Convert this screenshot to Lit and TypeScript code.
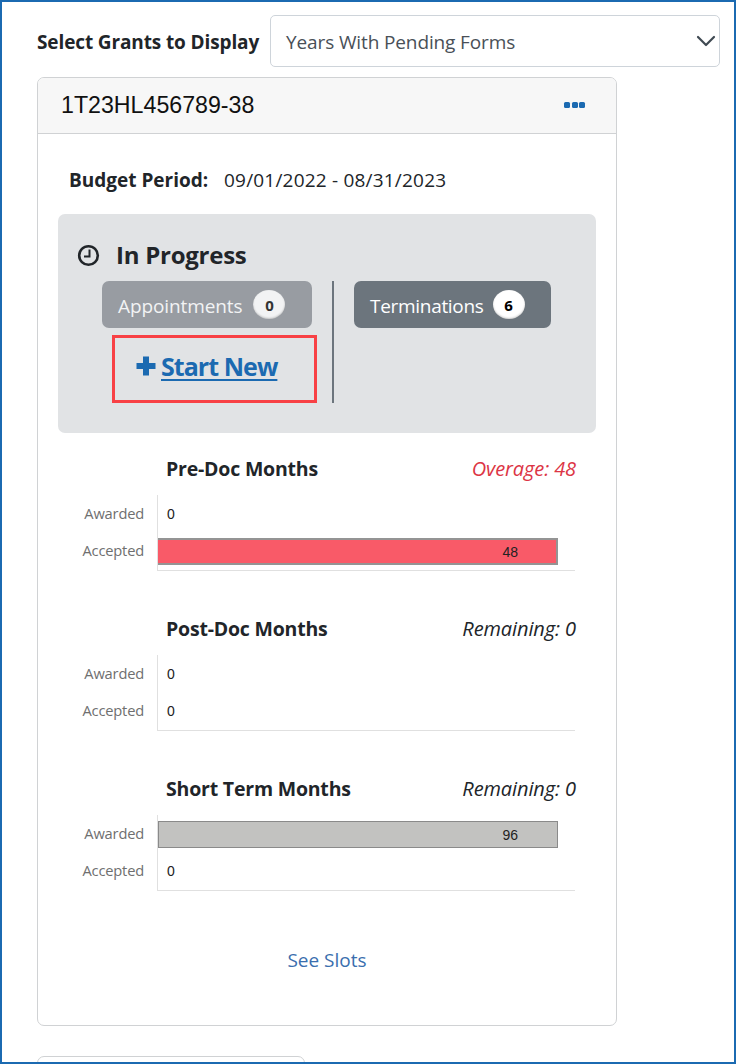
import { LitElement, html, css } from "lit";
import { customElement } from "lit/decorators.js";

type Row = { label: string; value: number; fill?: string };
type Chart = { title: string; status: string; over?: boolean; rows: Row[] };

const charts: Chart[] = [
  { title: "Pre-Doc Months", status: "Overage: 48", over: true, rows: [
    { label: "Awarded", value: 0 },
    { label: "Accepted", value: 48, fill: "fill-red" } ] },
  { title: "Post-Doc Months", status: "Remaining: 0", rows: [
    { label: "Awarded", value: 0 },
    { label: "Accepted", value: 0 } ] },
  { title: "Short Term Months", status: "Remaining: 0", rows: [
    { label: "Awarded", value: 96, fill: "fill-gray" },
    { label: "Accepted", value: 0 } ] },
];

@customElement("app-root")
export class AppRoot extends LitElement {
  static styles = css`
    :host { display: block; width: 736px; height: 1064px; box-sizing: border-box; overflow: hidden;
      border: 2px solid #1b6ab1; background: #fff;
      font-family: "Open Sans", "Noto Sans", sans-serif; color: #212529; }
    .page { padding: 13px 14px 0 35px; }
    .filter { display: flex; align-items: center; height: 52px; }
    .filter-label { width: 233px; flex: none; font-size: 19px; font-weight: 700; letter-spacing: -0.12px; color: #212529; white-space: nowrap; padding-top: 2px; box-sizing: border-box; }
    .select { flex: 1; box-sizing: border-box; height: 52px; border: 1px solid #ced4da; border-radius: 5px; display: flex; align-items: center; justify-content: space-between; padding: 0 1px 0 15px; font-size: 19px; letter-spacing: -0.12px; color: #495057; }
    .select span { padding-top: 2px; }
    .select svg { display: block; }
    .card { width: 580px; box-sizing: border-box; height: 949px; margin-top: 10px; border: 1px solid #d0d2d4; border-radius: 7px; overflow: hidden; }
    .card-head { height: 56px; box-sizing: border-box; background: #f7f7f7; border-bottom: 1px solid #d0d2d4; display: flex; align-items: center; justify-content: space-between; padding: 0 31px 0 23px; }
    .grant { font-family: "Liberation Sans", Arial, sans-serif; font-size: 23.2px; color: #111; }
    .dots { display: flex; gap: 1.5px; margin-top: -1px; }
    .dots i { width: 6px; height: 6px; border-radius: 1.5px; background: #1b6ab1; display: block; }
    .card-body { padding: 33px 20px 0; }
    .budget { display: flex; align-items: center; padding-left: 11px; font-size: 19px; line-height: 26px; letter-spacing: 0.2px; }
    .budget b { font-weight: 700; width: 155px; letter-spacing: 0; }
    .progress { margin-top: 21px; height: 219px; box-sizing: border-box; background: #e1e3e5; border-radius: 7px; padding: 25px 0 0 19px; }
    .progress-title { display: flex; align-items: center; gap: 16px; height: 32px; font-size: 24px; font-weight: 700; letter-spacing: -0.25px; line-height: 32px; color: #212529; }
    .columns { display: flex; margin-top: 10px; padding-left: 25px; }
    .left { width: 230px; height: 122px; border-right: 2px solid #6c757d; }
    .pill { height: 47px; box-sizing: border-box; display: inline-flex; align-items: center; border-radius: 7px; color: #fff; font-size: 19px; letter-spacing: -0.1px; padding: 0 0 0 16px; gap: 11px; }
    .pill-text { padding-top: 2px; }
    .pill.muted { width: 210px; background: #989ca2; color: #f2f3f4; }
    .pill.dark { width: 197px; background: #6c757d; margin-left: 20px; gap: 9px; letter-spacing: -0.3px; }
    .count { width: 32px; height: 29px; border-radius: 50%; background: #fff; color: #000; display: flex; align-items: center; justify-content: center; font-size: 15px; font-weight: 700; letter-spacing: 0; box-shadow: inset 0 -1px 2px rgba(0,0,0,.2); }
    .muted .count { background: #f2f3f4; color: #333; }
    .start { width: 205px; height: 68px; box-sizing: border-box; border: 3px solid #f84145; margin: 7px 0 0 10px; display: flex; align-items: center; padding: 0 0 6px 21px; gap: 5px; color: #1b6ab1; font-size: 25px; font-weight: 700; letter-spacing: -0.95px; }
    .start span { text-decoration: underline; text-decoration-thickness: 2px; text-underline-offset: 3px; }
    .chart { height: 160px; padding-top: 17px; box-sizing: border-box; }
    .chart-head { display: flex; justify-content: space-between; align-items: center; height: 36px; padding-left: 108px; padding-right: 20px; }
    .chart-title { font-size: 19.5px; font-weight: 700; letter-spacing: -0.2px; color: #212529; }
    .chart-status { font-size: 20px; font-style: italic; letter-spacing: -0.1px; color: #212529; }
    .chart-status.over { color: #dc3545; }
    .plot { display: grid; grid-template-columns: 86px 1fr; margin: 9px 21px 0 13px; }
    .labels { display: flex; flex-direction: column; }
    .labels div { height: 37px; box-sizing: border-box; padding-bottom: 1px; display: flex; align-items: center; justify-content: flex-end; padding-right: 13px; font-size: 14.7px; letter-spacing: -0.2px; color: #6f6f6f; }
    .bars { border-left: 1px solid #e0e0e0; border-bottom: 1px solid #e0e0e0; height: 76px; box-sizing: border-box; }
    .bar-row { height: 37px; display: flex; align-items: center; font-family: "Liberation Sans", Arial, sans-serif; font-size: 14px; color: #222; }
    .zero { padding-left: 9px; }
    .bar { width: 400px; height: 27px; box-sizing: border-box; border: 1px solid #8a8a8a; display: flex; align-items: center; justify-content: flex-end; margin-top: 2px; }
    .fill-red { background: #f95a68; border-color: #949494; border-width: 2px 2px 2px 0; padding-right: 38px; }
    .fill-gray { background: #c2c2c0; padding-right: 39px; }
    .see { text-align: center; font-size: 19px; color: #3a6eae; margin-top: 32px; line-height: 30px; }
    .next { width: 268px; height: 40px; margin-top: 30px; box-sizing: border-box; border: 1px solid #d0d2d4; border-radius: 7px; }
  `;

  private renderChart(c: Chart) {
    return html`<section class="chart">
      <div class="chart-head">
        <span class="chart-title">${c.title}</span>
        <span class="chart-status ${c.over ? "over" : ""}">${c.status}</span>
      </div>
      <div class="plot">
        <div class="labels">${c.rows.map((r) => html`<div>${r.label}</div>`)}</div>
        <div class="bars">
          ${c.rows.map((r) => html`<div class="bar-row">
            ${r.fill ? html`<div class="bar ${r.fill}">${r.value}</div>` : html`<div class="zero">${r.value}</div>`}
          </div>`)}
        </div>
      </div>
    </section>`;
  }

  render() {
    return html`<div class="page">
      <div class="filter">
        <div class="filter-label">Select Grants to Display</div>
        <div class="select"><span>Years With Pending Forms</span>
          <svg width="24" height="24" viewBox="0 0 24 24" fill="none" stroke="#3f4952" stroke-width="2.2" stroke-linecap="round" stroke-linejoin="round"><path d="M4 8l8 8 8-8"/></svg>
        </div>
      </div>
      <div class="card">
        <div class="card-head"><span class="grant">1T23HL456789-38</span>
          <div class="dots"><i></i><i></i><i></i></div></div>
        <div class="card-body">
          <div class="budget"><b>Budget Period:</b><span>09/01/2022 - 08/31/2023</span></div>
          <div class="progress">
            <div class="progress-title">
              <svg width="23" height="23" viewBox="0 0 23 23" fill="none" stroke="#212529"><circle cx="11.5" cy="11.5" r="9.3" stroke-width="2.6"/><path d="M12.5 5.5v7H7" stroke-width="2"/></svg>
              <span>In Progress</span>
            </div>
            <div class="columns">
              <div class="left">
                <div class="pill muted"><span class="pill-text">Appointments</span><span class="count">0</span></div>
                <div class="start">
                  <svg width="20" height="20" viewBox="0 0 20 20" fill="#1b6ab1"><path d="M7 .5h6V7h6.500v6H13v6.500H7V13H.5V7H7z"/></svg>
                  <span>Start New</span>
                </div>
              </div>
              <div class="pill dark"><span class="pill-text">Terminations</span><span class="count">6</span></div>
            </div>
          </div>
          ${charts.map((c) => this.renderChart(c))}
          <div class="see">See Slots</div>
        </div>
      </div>
      <div class="next"></div>
    </div>`;
  }
}
